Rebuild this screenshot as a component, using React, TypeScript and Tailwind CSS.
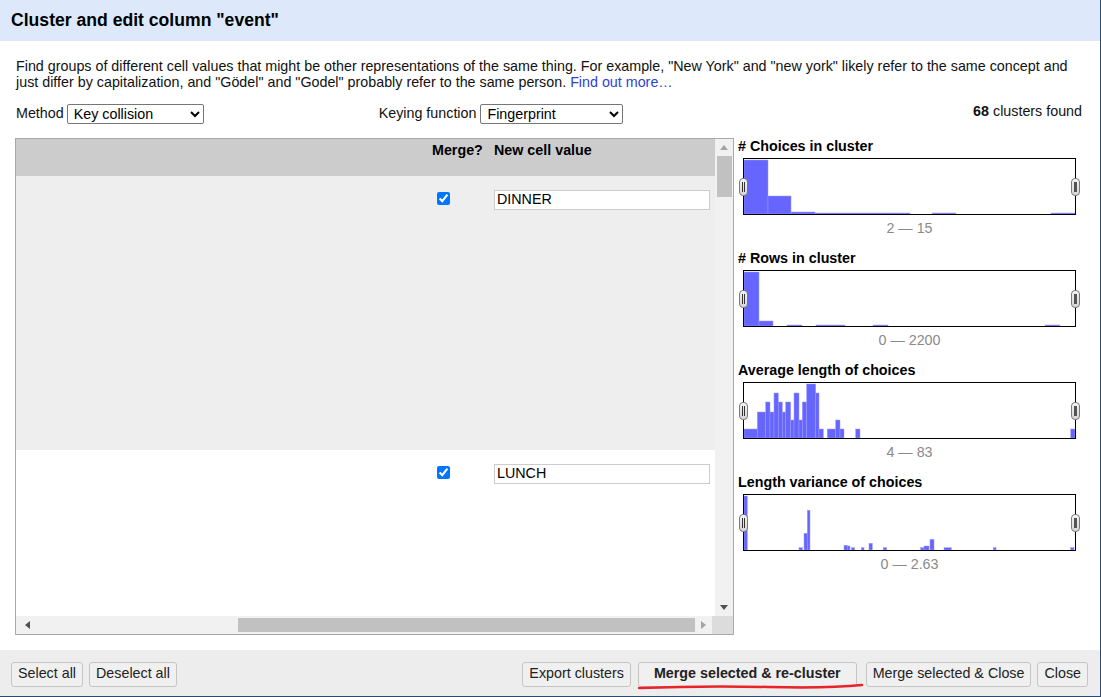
import React from 'react';

type Bar = [number, number, number]; // x, width, top (inside a 331x55 box)

const histograms: { title: string; range: string; bars: Bar[] }[] = [
  {
    title: '# Choices in cluster',
    range: '2 — 15',
    bars: [
      [0, 24, 1], [24, 23, 37], [47, 24, 53], [71, 95, 54], [188, 24, 54], [307, 24, 54],
    ],
  },
  {
    title: '# Rows in cluster',
    range: '0 — 2200',
    bars: [
      [0, 15, 1], [15, 14, 50], [43, 15, 54], [72, 29, 54], [129, 15, 54], [301, 15, 54],
    ],
  },
  {
    title: 'Average length of choices',
    range: '4 — 83',
    bars: [
      [0, 13.3, 46], [13.3, 8.4, 29], [21.7, 4.3, 19], [26, 4, 29], [30, 4.3, 10], [34.3, 4, 19],
      [38.3, 3.4, 29], [41.7, 5, 19], [46.7, 3.3, 37], [50, 5, 10], [55, 3.3, 37], [58.3, 4.4, 19],
      [62.7, 9, 1], [71.7, 3.3, 10], [75, 4.3, 46], [83.3, 8.4, 46], [91.7, 4.3, 37], [96, 4, 46],
      [111.7, 4.3, 46], [326.7, 4.3, 46],
    ],
  },
  {
    title: 'Length variance of choices',
    range: '0 — 2.63',
    bars: [
      [0, 3.3, 1], [55, 3.3, 52.7], [60, 3.3, 38.3], [63.3, 2.7, 15.3], [100, 3.3, 50.3],
      [103.3, 2.7, 51], [107.3, 3.3, 52.7], [117.3, 2.7, 52.7], [125, 3.3, 48.3], [139.3, 3.3, 52.7],
      [176.7, 3.3, 52.7], [180, 5, 51], [186, 4, 44.3], [200, 7.3, 52.7], [249.3, 2.7, 52.7],
      [326.7, 3.3, 52.7],
    ],
  },
];

const Handle: React.FC<{ side: 'left' | 'right' }> = ({ side }) => (
  <div
    className={`absolute top-[19px] h-[18px] w-[9px] rounded-[4px] border border-[#7a7a7a] bg-gradient-to-b from-[#f4f4f4] to-[#d6d6d6] flex items-center justify-center gap-[1px] ${
      side === 'left' ? 'left-[-5px]' : 'right-[-5px]'
    }`}
  >
    {side === 'left' ? (
      <>
        <div className="h-[10px] w-[1px] bg-[#333]" />
        <div className="h-[10px] w-[1px] bg-[#333]" />
      </>
    ) : (
      <div className="h-[10px] w-[3px] bg-[#555]" />
    )}
  </div>
);

const Histogram: React.FC<{ title: string; range: string; bars: Bar[] }> = ({ title, range, bars }) => (
  <div className="mb-[14px]">
    <div className="text-[14.3px] leading-[16px] font-bold text-black">{title}</div>
    <div className="relative ml-[5px] mt-[4px] w-[333px] h-[57px] border border-black bg-white">
      <svg width="331" height="55" viewBox="0 0 331 55" className="block">
        {bars.map(([x, w, top], i) => (
          <rect key={i} x={x} y={top} width={w} height={55 - top} fill="#6666ff" stroke="#9a9aff" strokeWidth="0.5" />
        ))}
      </svg>
      <Handle side="left" />
      <Handle side="right" />
    </div>
    <div className="ml-[5px] mt-[5px] w-[333px] text-center text-[14.3px] leading-[16px] text-[#8a8a8a]">{range}</div>
  </div>
);

const Btn: React.FC<{ children: React.ReactNode; bold?: boolean; className?: string }> = ({ children, bold, className }) => (
  <button
    className={`h-[25px] rounded-[3px] border border-[#c5c5c5] bg-[#f0f0f0] text-[14.3px] text-[#222] ${bold ? 'font-bold' : ''} ${className ?? ''}`}
  >
    {children}
  </button>
);

const Row: React.FC<{ value: string; shade?: boolean; height: number }> = ({ value, shade, height }) => (
  <div className={`flex shrink-0 ${shade ? 'bg-[#eeeeee]' : 'bg-white'}`} style={{ height }}>
    <div className="w-[416px] shrink-0" />
    <div className="w-[62px] shrink-0 pt-[16px] pl-[5px]">
      <input type="checkbox" defaultChecked className="block w-[13px] h-[13px] m-0" />
    </div>
    <div className="flex-1 pt-[14px]">
      <input
        type="text"
        defaultValue={value}
        className="block w-[216px] h-[20px] border border-[#cccccc] bg-white px-[2px] text-[14.3px] text-black outline-none"
      />
    </div>
  </div>
);

export default function App() {
  return (
    <div
      className="w-[1101px] h-[697px] flex flex-col bg-white border-r border-b border-[#2b4a6d] overflow-hidden text-[#111]"
      style={{ fontFamily: '"Liberation Sans", Arial, sans-serif' }}
    >
      {/* title bar */}
      <div className="h-[41px] shrink-0 bg-[#dde9fb] flex items-center pl-[11px]">
        <h1 className="text-[17.6px] font-bold text-black">Cluster and edit column "event"</h1>
      </div>

      {/* body */}
      <div className="flex-1 flex flex-col pl-[15px] pr-[18px] pt-[17px]">
        <p className="ml-px text-[14.3px] leading-[16px] text-[#111] whitespace-nowrap">
          Find groups of different cell values that might be other representations of the same thing. For example, "New York" and "new york" likely refer to the same concept and
          <br />
          just differ by capitalization, and "Gödel" and "Godel" probably refer to the same person.{' '}
          <span className="text-[#2f3fd4]">Find out more…</span>
        </p>

        <div className="mt-[14px] ml-px flex items-center h-[20px] text-[14.3px]">
          <span className="mr-[3px]">Method</span>
          <select className="w-[137px] h-[20px] border border-[#767676] rounded-[2px] bg-white text-[14.3px] text-black pl-[2px]">
            <option>Key collision</option>
          </select>
          <span className="ml-[175px] mr-[4px]">Keying function</span>
          <select className="w-[143px] h-[20px] border border-[#767676] rounded-[2px] bg-white text-[14.3px] text-black pl-[2px]">
            <option>Fingerprint</option>
          </select>
          <span className="ml-auto -mt-[4px]">
            <b>68</b> clusters found
          </span>
        </div>

        <div className="mt-[14px] flex">
          {/* cluster table */}
          <div className="w-[719px] h-[497px] border border-[#aaaaaa] flex flex-col shrink-0">
            <div className="flex flex-1 min-h-0">
              <div className="flex-1 flex flex-col overflow-hidden">
                <div className="h-[37px] shrink-0 bg-[#cccccc] flex text-[14.3px] font-bold text-black">
                  <div className="w-[416px] shrink-0" />
                  <div className="w-[62px] shrink-0 pt-[1px]">Merge?</div>
                  <div className="flex-1 pt-[1px]">New cell value</div>
                </div>
                <Row value="DINNER" shade height={274} />
                <Row value="LUNCH" height={200} />
              </div>
              {/* vertical scrollbar */}
              <div className="w-[18px] shrink-0 bg-[#f1f1f1] flex flex-col items-center">
                <div className="h-[17px] flex items-center justify-center">
                  <svg width="8" height="5" viewBox="0 0 8 5"><path d="M0 5 L4 0 L8 5 Z" fill="#a3a3a3" /></svg>
                </div>
                <div className="w-[15px] h-[41px] bg-[#c1c1c1]" />
                <div className="flex-1" />
                <div className="h-[17px] flex items-center justify-center">
                  <svg width="8" height="5" viewBox="0 0 8 5"><path d="M0 0 L8 0 L4 5 Z" fill="#505050" /></svg>
                </div>
              </div>
            </div>
            {/* horizontal scrollbar */}
            <div className="h-[18px] shrink-0 flex bg-[#f1f1f1]">
              <div className="w-[17px] flex items-center justify-center ml-[3px]">
                <svg width="5" height="8" viewBox="0 0 5 8"><path d="M5 0 L5 8 L0 4 Z" fill="#505050" /></svg>
              </div>
              <div className="w-[202px]" />
              <div className="w-[457px] h-[14px] mt-[2px] bg-[#c1c1c1]" />
              <div className="w-[17px] flex items-center justify-center">
                <svg width="5" height="8" viewBox="0 0 5 8"><path d="M0 0 L0 8 L5 4 Z" fill="#a3a3a3" /></svg>
              </div>
              <div className="flex-1 bg-[#dcdcdc]" />
            </div>
          </div>

          {/* facets */}
          <div className="ml-[4px] flex flex-col">
            {histograms.map(h => (
              <Histogram key={h.title} {...h} />
            ))}
          </div>
        </div>
      </div>

      {/* footer */}
      <div className="h-[46px] shrink-0 bg-[#ededed] flex items-center pl-[11px] pr-[12px] pt-[2px]">
        <Btn className="px-[6px]">Select all</Btn>
        <Btn className="ml-[6px] px-[6px]">Deselect all</Btn>
        <div className="flex-1" />
        <Btn className="px-[6px]">Export clusters</Btn>
        <div className="relative ml-[7px]">
          <Btn bold className="px-[15px]">Merge selected &amp; re-cluster</Btn>
          <svg className="absolute left-0 top-[21px]" width="226" height="9" viewBox="0 0 226 9">
            <path d="M1 6 C 40 4.5, 90 4, 130 5 S 200 5.5, 224 3" stroke="#e8242a" strokeWidth="2.5" fill="none" strokeLinecap="round" />
          </svg>
        </div>
        <Btn className="ml-[9px] px-[6px]">Merge selected &amp; Close</Btn>
        <Btn className="ml-[6px] px-[6px]">Close</Btn>
      </div>
    </div>
  );
}
